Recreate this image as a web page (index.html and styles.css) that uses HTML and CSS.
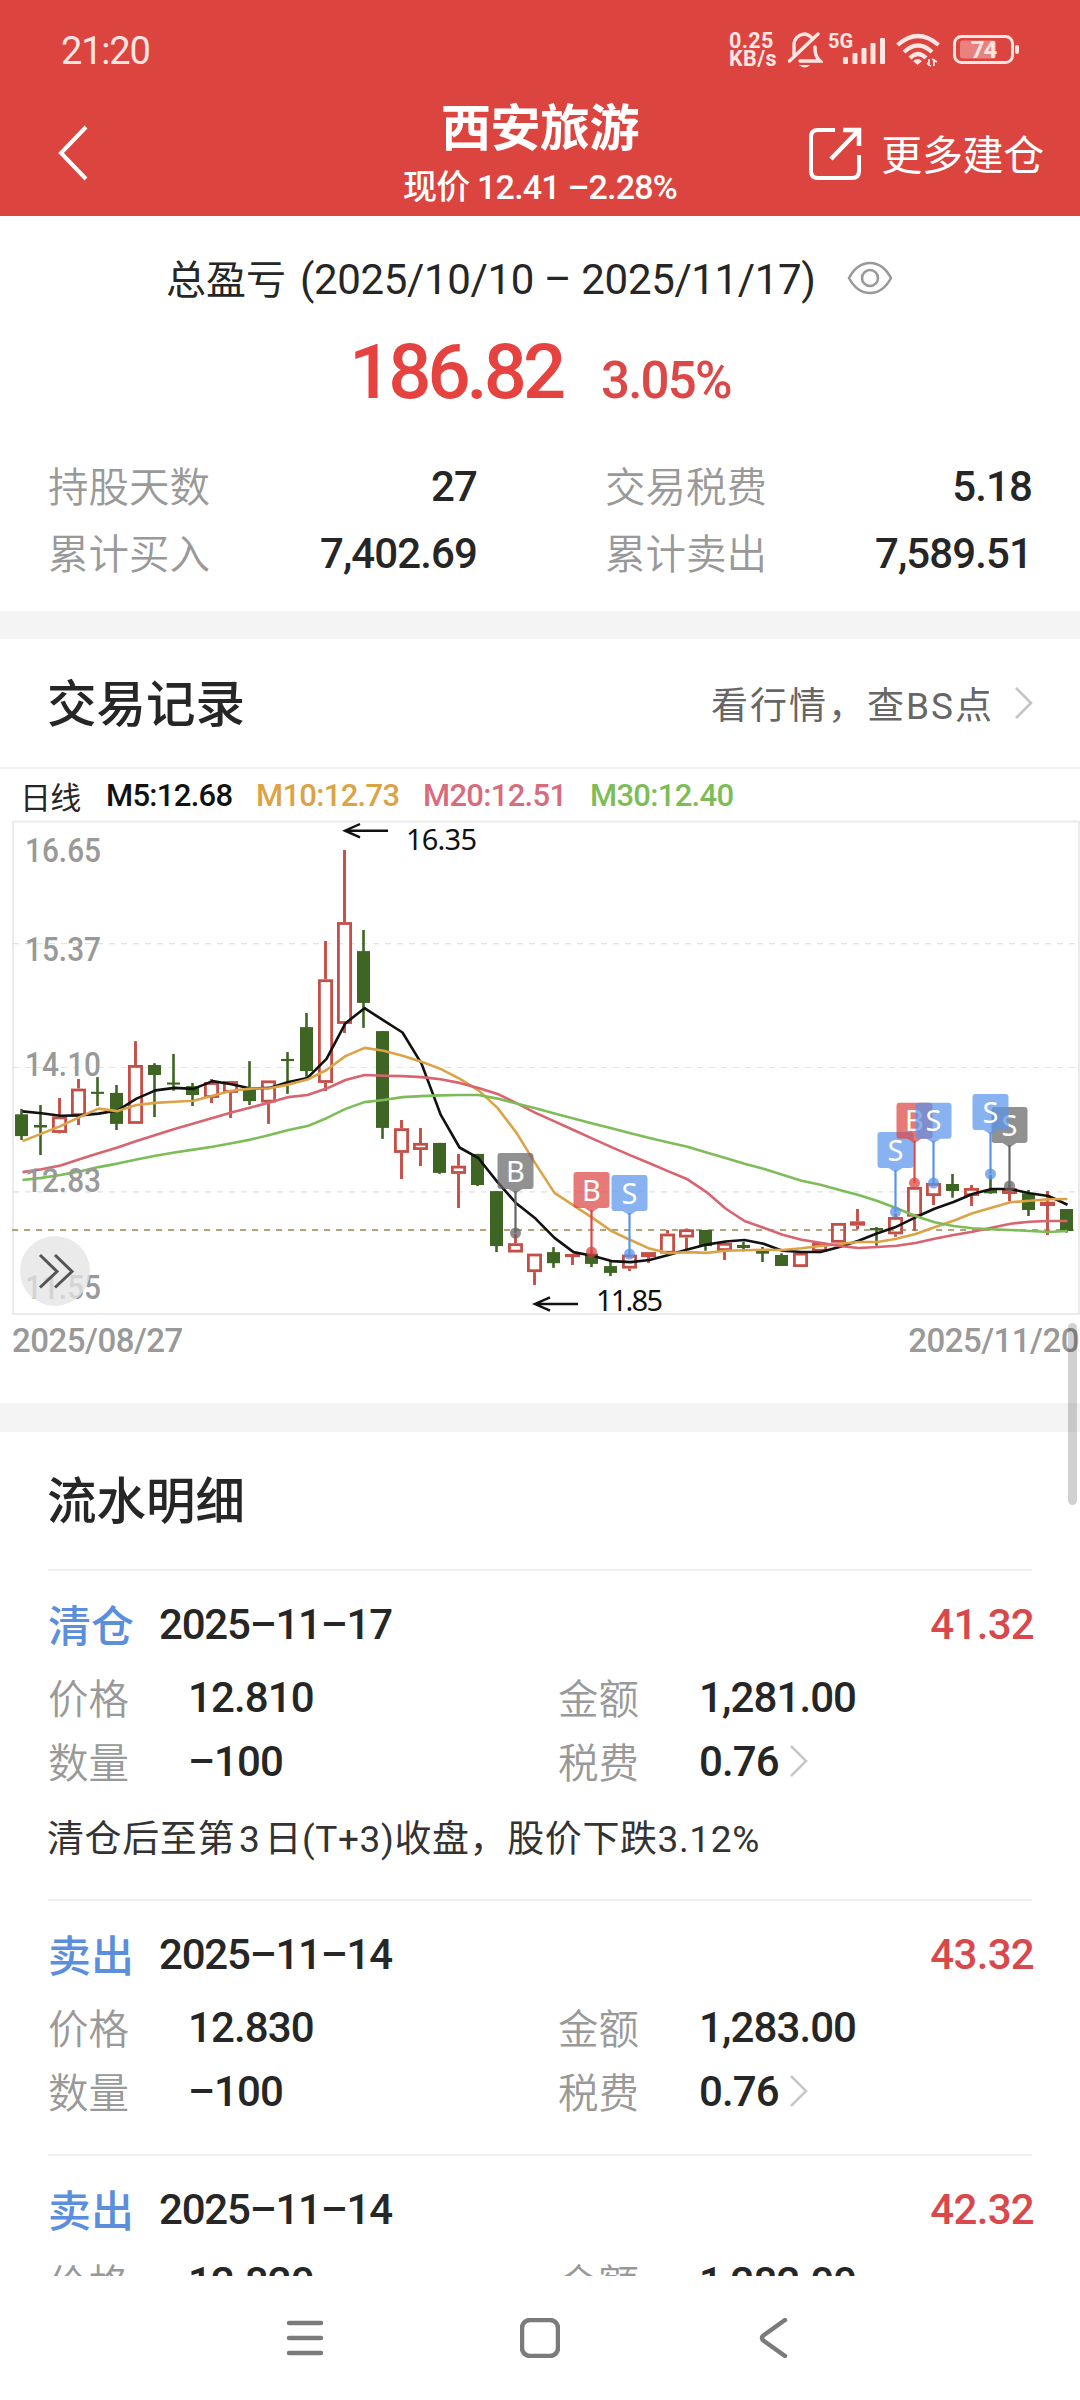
FILE: index.html
```html
<!DOCTYPE html>
<html lang="zh-CN">
<head>
  <meta charset="UTF-8">
  <meta name="viewport" content="width=device-width, initial-scale=1.0">
  <title>西安旅游</title>
  <link rel="stylesheet" href="styles.css">
</head>
<body>
  <div class="screen">
    <header class="header">
      <div class="status">
        <span class="clock">21:20</span>
        <div class="status-icons">
          <div class="speed"><span>0.25</span><span>KB/s</span></div>
          <svg class="bell" width="36" height="38" viewBox="0 0 36 38" fill="none" stroke="#ffe6e3" stroke-width="3.4" stroke-linecap="round">
            <path d="M7 24V14c0-6 4-10 10-11 3 0 5 1 7 3M2.500 30L31 3M13 30h20c-4-4-5-7-5-14"/>
            <path d="M12 34h11q-5 5-11 0z" fill="#ffe6e3" stroke="none"/>
          </svg>
          <svg class="signal" width="58" height="42" viewBox="0 -4 58 42">
            <text x="0" y="15" class="net">5G</text>
            <g fill="#ffe6e3"><rect x="15" y="24" width="5" height="7" rx="1"/><rect x="24.500" y="20" width="5" height="11" rx="1"/><rect x="33.500" y="15" width="5" height="16" rx="1"/><rect x="42.500" y="10" width="5" height="21" rx="1"/><rect x="52" y="5" width="5" height="26" rx="1"/></g>
          </svg>
          <svg class="wifi" width="44" height="34" viewBox="0 0 44 34" fill="none" stroke="#ffe6e3" stroke-width="4.200">
            <path d="M1.500 12Q22-6 42.500 12M8 19Q22 6 36 19M14 25Q22 17 30 25"/>
            <path d="M17 28q5-4 9 0l-4.500 4z" fill="#ffe6e3" stroke="none"/>
            <path d="M33 26v7M35 33l-4-3M38 33v-7M36 26l5 3" stroke-width="1.800"/>
          </svg>
          <svg class="battery" width="68" height="32" viewBox="0 0 68 32">
            <rect x="1.500" y="2.500" width="58" height="26" rx="7" fill="none" stroke="#ffe6e3" stroke-width="3"/>
            <rect x="7" y="6.500" width="36" height="18" rx="3" fill="#e9827e"/>
            <rect x="62" y="11" width="4" height="9" rx="2" fill="#ffe6e3"/>
            <text x="30.500" y="24" text-anchor="middle" class="level">74</text>
          </svg>
        </div>
      </div>
      <div class="nav">
        <svg class="back" width="32" height="56" viewBox="0 0 32 56" fill="none" stroke="#fff" stroke-width="4"><path d="M29 2L4 28l25 26"/></svg>
        <div class="heading">
          <h1>西安旅游</h1>
          <p>现价 12.41 –2.28%</p>
        </div>
        <div class="more">
          <svg width="54" height="54" viewBox="0 0 54 54" fill="none" stroke="#fff" stroke-width="4">
            <path d="M27 3H10q-7 0-7 7v34q0 7 7 7h34q7 0 7-7V28"/>
            <path d="M35 3h16v16M50 4L23 32" stroke-width="4.500"/>
          </svg>
          <span>更多建仓</span>
        </div>
      </div>
    </header>

    <section class="summary">
      <div class="period">
        <span>总盈亏</span><span class="range">(2025/10/10 – 2025/11/17)</span>
        <svg width="46" height="34" viewBox="0 0 46 34" fill="none" stroke="#999" stroke-width="2.600"><path d="M2 17Q10 2 23 2t21 15Q36 32 23 32T2 17z"/><circle cx="23" cy="17" r="8"/></svg>
      </div>
      <div class="profit"><span class="profit-value">186.82</span><span class="profit-rate">3.05%</span></div>
      <div class="stats">
        <span class="label">持股天数</span><span class="num">27</span>
        <span class="label">交易税费</span><span class="num">5.18</span>
        <span class="label">累计买入</span><span class="num">7,402.69</span>
        <span class="label">累计卖出</span><span class="num">7,589.51</span>
      </div>
    </section>

    <section class="trades">
      <div class="trades-head">
        <h2>交易记录</h2>
        <a class="link">看行情，查BS点
          <svg width="20" height="34" viewBox="0 0 20 34" fill="none" stroke="#c4c4c4" stroke-width="2.600"><path d="M2 2l15 15L2 32"/></svg>
        </a>
      </div>
      <div class="legend">
        <span class="cycle">日线</span><span class="m5">M5:12.68</span><span class="m10">M10:12.73</span><span class="m20">M20:12.51</span><span class="m30">M30:12.40</span>
      </div>
      <svg id="chart" class="chart" width="1080" height="504" viewBox="0 16 1080 504"></svg>
      <div class="dates"><span>2025/08/27</span><span>2025/11/20</span></div>
    </section>

    <section class="details">
      <h2 class="details-title">流水明细</h2>
      <article class="record">
        <div class="record-head"><span class="type">清仓</span><span class="num">2025–11–17</span><span class="num gain">41.32</span></div>
        <div class="fields">
          <span class="label">价格</span><span class="num">12.810</span><span class="label">金额</span><span class="num">1,281.00</span>
          <span class="label">数量</span><span class="num">–100</span><span class="label">税费</span><span class="num">0.76<svg width="20" height="34" viewBox="0 0 20 34"><path d="M2 2l15 15L2 32"/></svg></span>
        </div>
        <p class="note">清仓后至第<span class="day">3</span>日(T+3)收盘，股价下跌3.12%</p>
      </article>
      <article class="record">
        <div class="record-head"><span class="type">卖出</span><span class="num">2025–11–14</span><span class="num gain">43.32</span></div>
        <div class="fields">
          <span class="label">价格</span><span class="num">12.830</span><span class="label">金额</span><span class="num">1,283.00</span>
          <span class="label">数量</span><span class="num">–100</span><span class="label">税费</span><span class="num">0.76<svg width="20" height="34" viewBox="0 0 20 34"><path d="M2 2l15 15L2 32"/></svg></span>
        </div>
      </article>
      <article class="record">
        <div class="record-head"><span class="type">卖出</span><span class="num">2025–11–14</span><span class="num gain">42.32</span></div>
        <div class="fields">
          <span class="label">价格</span><span class="num">12.820</span><span class="label">金额</span><span class="num">1,282.00</span>
        </div>
      </article>
    </section>

    <nav class="system-bar">
      <svg width="40" height="40" viewBox="0 0 40 40"><path d="M4 5h32M4 20h32M4 35h32"/></svg>
      <svg width="40" height="40" viewBox="0 0 40 40"><rect x="2" y="2" width="36" height="36" rx="8"/></svg>
      <svg width="40" height="40" viewBox="0 0 40 40"><path d="M30 2L9 17q-4 3 0 6l21 15"/></svg>
    </nav>
    <div class="scrollbar"></div>
  </div>
  <script src="chart.js"></script>
</body>
</html>
```
FILE: styles.css
```css
* { box-sizing: border-box; margin: 0; padding: 0; }
body { font-family: Roboto, "Noto Sans CJK SC", sans-serif; background: #fff; color: #262626; }
.screen { position: relative; width: 1080px; height: 2400px; display: flex; flex-direction: column; overflow: hidden; }
svg { display: block; flex: none; }
h1, h2 { font-weight: 500; }

.header { height: 216px; flex: none; background: #dc443f; color: #fff; }
.status { height: 100px; padding: 0 59px 0 61px; display: flex; justify-content: space-between; align-items: center; color: #ffe6e3; }
.clock { font-size: 38px; letter-spacing: -1.2px; padding-top: 2px; }
.status-icons { display: flex; align-items: center; }
.speed { width: 48px; display: flex; flex-direction: column; font-size: 21.5px; line-height: 18px; font-weight: 700; letter-spacing: 0.4px; }
.bell { margin-left: 10px; }
.signal { margin-left: 5px; }
.wifi { margin-left: 10px; }
.battery { margin-left: 13px; }
.net { font-size: 20px; font-weight: 700; fill: #ffe6e3; }
.level { font-size: 24px; font-weight: 700; fill: #ffe6e3; letter-spacing: -1px; }
.nav { height: 116px; padding: 0 36px; display: grid; grid-template-columns: 1fr auto 1fr; }
.back { margin: 25px 0 0 21px; }
.heading { width: 300px; text-align: center; }
.heading h1 { margin-top: -1px; font-size: 50px; line-height: 60px; font-weight: 700; letter-spacing: -0.5px; }
.heading p { font-size: 34px; line-height: 56px; letter-spacing: -0.8px; font-weight: 500; white-space: nowrap; }
.more { height: 106px; display: flex; justify-content: flex-end; align-items: center; gap: 19px; font-size: 41px; letter-spacing: -0.3px; }
.more svg { margin-top: 1px; }
.more span { margin-top: -3px; }

.summary { height: 395px; flex: none; }
.period { height: 124px; padding-left: 166px; display: flex; align-items: center; font-size: 40px; }
.period span:first-child { margin-top: -3px; }
.range { margin-left: 14px; width: 512px; padding-top: 2px; font-size: 42px; letter-spacing: -0.35px; white-space: nowrap; }
.period svg { margin-left: 35px; }
.profit { height: 98px; margin-top: -17px; padding-left: 349px; display: flex; align-items: baseline; line-height: 98px; color: #e64340; font-weight: 500; }
.profit-value { width: 252px; font-size: 76px; letter-spacing: -4px; }
.profit-rate { font-size: 51px; letter-spacing: -1.8px; color: #dc4747; }
.stats { margin-top: 30px; padding: 0 48px; display: grid; grid-template-columns: 200px 229px 128px 200px 227px; grid-auto-rows: 67px; align-items: center; }
.stats .label:nth-of-type(4n+3) { grid-column: 4; }
.stats .num { text-align: right; padding-top: 3px; }
.label { font-size: 40.5px; color: #999; font-weight: 350; white-space: nowrap; }
.num { font-size: 42px; font-weight: 500; letter-spacing: -0.9px; white-space: nowrap; }

.trades { height: 792px; flex: none; border-top: 28px solid #f4f4f4; }
.trades-head { height: 130px; padding: 0 46px 0 47px; display: flex; justify-content: space-between; align-items: center; border-bottom: 2px solid #f0f0f0; }
.trades-head h2 { margin-top: -5px; }
.trades-head h2, .details-title { font-size: 49.5px; }
.link { display: flex; align-items: center; gap: 20px; font-size: 37px; letter-spacing: 2px; color: #666; }
.legend { height: 47px; padding-top: 6px; padding-left: 20px; display: flex; align-items: center; font-size: 31px; font-weight: 500; letter-spacing: -0.7px; white-space: nowrap; }
.cycle { width: 86px; font-weight: 400; }
.m5 { width: 150px; color: #111; }
.m10 { width: 167px; color: #dba345; }
.m20 { width: 167px; color: #d96c7c; }
.m30 { color: #7dbd58; }
.dates { height: 41px; padding: 0 1px 0 12px; display: flex; justify-content: space-between; align-items: center; font-size: 33px; color: #999; letter-spacing: -0.5px; font-weight: 500; }

.axis { font-size: 34px; font-weight: 500; fill: #999; }
.extreme { font-family: "Noto Sans", sans-serif; font-size: 29px; fill: #111; }
.tag-text { font-family: "Noto Sans", sans-serif; font-size: 29px; fill: #fff; text-anchor: middle; }

.details { flex: 1; min-height: 0; overflow: hidden; padding: 0 48px; border-top: 29px solid #f4f4f4; }
.details-title { height: 139px; line-height: 140px; margin-left: 0; border-bottom: 2px solid #f0f0f0; text-indent: -1px; }
.record { padding: 20px 0 31px; border-bottom: 2px solid #f0f0f0; }
.record-head { height: 66px; margin-bottom: 8px; display: flex; align-items: center; }
.type { width: 111px; margin-top: -2px; font-size: 43px; color: #5b8edb; font-weight: 500; }
.record-head .num { letter-spacing: -1.2px; }
.record-head .gain { margin-left: auto; margin-right: -2px; letter-spacing: -0.7px; color: #d9484a; }
.fields { display: grid; grid-template-columns: 140px 370px 141px 1fr; grid-auto-rows: 64px; align-items: center; }
.fields .label { margin-top: -2px; }
.fields .num { display: flex; align-items: center; gap: 10px; }
.fields path { fill: none; stroke: #c8c8c8; stroke-width: 2.6; }
.note { height: 60px; margin-top: 15px; line-height: 64px; font-size: 37px; letter-spacing: 0.6px; text-indent: -1px; color: #333; white-space: nowrap; }
.day { margin: 0 4px; }

.system-bar { height: 124px; flex: none; display: flex; justify-content: center; align-items: center; gap: 195px; background: #fff; }
.system-bar svg { fill: none; stroke: #7b7b7b; stroke-width: 4.5; stroke-linecap: round; }
.scrollbar { position: absolute; top: 1323px; right: 3px; width: 9px; height: 182px; border-radius: 5px; background: rgba(0, 0, 0, 0.18); }
```
FILE: chart.js
```javascript
const chart = document.getElementById('chart');
const x = i => 21.5 + 19 * i;

// [up/down, high, body top, body bottom, low]
const candles = [
  ['d', 308.9, 314.3, 336.1, 340], ['d', 305, 325, 327.5, 355], ['u', 297.9, 316.4, 332.9, 333.6], ['u', 278.9, 288.6, 316, 325],
  ['d', 277.1, 291.8, 293.9, 306], ['d', 285, 292.9, 323.9, 330], ['u', 241.1, 265, 323.9, 323.9], ['d', 263.2, 265, 275, 317.1],
  ['d', 253.9, 282.5, 284.6, 290.7], ['d', 282.9, 286.1, 295, 306], ['u', 278.9, 282.1, 297.9, 302.9], ['u', 281.1, 281.1, 292.9, 317.9],
  ['d', 261.1, 290, 301.1, 305], ['u', 280.4, 280.4, 302.5, 323.9], ['d', 252.1, 258.9, 261.1, 293.9], ['d', 212.9, 227.1, 271.1, 276.8],
  ['u', 141.1, 179.3, 282.9, 291.1], ['u', 50, 122.1, 223.9, 232.9], ['d', 130, 151.1, 202.9, 227.9], ['d', 231.1, 231.1, 327.9, 338.9],
  ['u', 320, 328.2, 352.9, 378.9], ['u', 327.9, 342.9, 350, 366.1], ['d', 342.9, 342.9, 372.9, 373.9], ['u', 353.9, 365.7, 373.9, 407.9],
  ['d', 353.9, 353.9, 385, 386.1], ['d', 391.1, 391.1, 446.1, 452.1], ['u', 434, 443.2, 452.5, 452.5], ['u', 453.6, 453.6, 472.1, 485],
  ['d', 447.1, 452.1, 463.2, 467.9], ['u', 453.9, 453.9, 456.8, 465], ['d', 450.7, 453.6, 463.9, 467.1], ['d', 460.7, 466.1, 472.9, 476.1],
  ['u', 453.6, 454.6, 468.6, 471.1], ['u', 452.1, 452.1, 457.1, 462.9], ['u', 430, 433.6, 453.6, 453.6], ['u', 428.6, 429.3, 437.5, 449.3],
  ['d', 430, 430, 446.1, 450.7], ['u', 442.1, 442.9, 451, 460], ['d', 442, 445, 448, 451.3], ['d', 447, 451, 453.7, 462],
  ['d', 453.3, 455, 466, 466], ['u', 452.7, 452.7, 467, 467], ['u', 442.5, 443, 451.7, 453.3], ['u', 423, 423, 442.7, 442.7],
  ['u', 409, 421.3, 425.7, 429.3], ['d', 427, 428, 430.3, 445.7], ['u', 413.3, 417, 434.3, 436.7], ['u', 387, 387, 416.7, 430.7],
  ['u', 383, 383, 396, 405], ['d', 374, 384, 391, 397.7], ['u', 385, 388, 396, 406], ['d', 375, 390, 393.3, 393.7],
  ['u', 385, 388.3, 394, 401.3], ['d', 390, 393.3, 410, 416], ['u', 391, 401.7, 406, 435], ['d', 409, 409, 431, 432.7]
];

const averages = [
  ['#111', [311.4, 313.2, 315.7, 315.4, 313.6, 310.5, 298.6, 290.4, 287.9, 288.9, 281.1, 284.3, 288.6, 287.9, 282.1, 277.9, 258.9, 223.2, 208.2, 220.4, 232.5, 263.6, 314.3, 347.5, 358.2, 382.1, 403.6, 418.6, 437.9, 452.1, 455.7, 461.1, 462.1, 460, 455, 449.6, 444.6, 441.5, 440, 443.7, 450.7, 452, 452, 447, 440.7, 433.3, 426.7, 417.3, 408.7, 402, 394, 389, 389, 393.3, 396, 404.7]],
  ['#dba345', [341.1, 333.6, 326.1, 317.1, 308.6, 311.1, 305, 302.9, 301.8, 300.7, 295.7, 290.7, 288.6, 288.2, 284.6, 279.6, 270, 256.1, 247.9, 250.7, 255.7, 261.8, 268.9, 278.6, 290.4, 307.9, 332.9, 363.6, 392.9, 405.4, 417.9, 431.1, 440, 448.6, 453.2, 452.1, 452.9, 450.7, 450.3, 449.7, 450, 448.3, 446, 444, 442, 442, 438.7, 434, 427.3, 420.7, 413.3, 407.7, 402.3, 400.7, 399.3, 399]],
  ['#d9636f', [372.1, 369.3, 365.4, 359.3, 353.2, 347.5, 341.1, 335, 328.9, 323.6, 317.9, 312.5, 307.5, 302.5, 297.1, 295, 288.6, 280, 275, 275.7, 276.1, 277.1, 279.3, 282.9, 287.9, 293.9, 303.2, 312.9, 321.4, 330, 338.6, 347.1, 355.4, 363.2, 371.4, 379.3, 392.1, 408.5, 421, 427.7, 434.7, 439.7, 442.7, 446, 448, 447, 445.7, 443, 438.7, 435, 431.7, 427.7, 423.7, 421.7, 421, 421]],
  ['#7dbd58', [380, 377.9, 375, 371.4, 367.1, 363.6, 359.6, 355.7, 352.5, 349.6, 346.8, 343.2, 339.6, 335, 330, 326.1, 318.2, 308.9, 302.1, 300, 297.1, 296.1, 295.4, 295, 295, 298.6, 303.6, 308.2, 313.6, 318.6, 323.6, 328.2, 333.2, 337.9, 342.5, 346.8, 352.5, 358, 363.7, 368.7, 374.7, 380.7, 384.7, 390, 395, 401, 408.3, 416, 422.3, 426, 428.3, 429.3, 430, 431, 432, 431]]
];

// [candle index, letter, colour, tag top, dot centre]
const tags = [
  [26, 'B', 'gray', 353, 433], [30, 'B', 'red', 372, 452], [32, 'S', 'blue', 375, 454],
  [46, 'S', 'blue', 332, 412], [47, 'B', 'red', 302.7, 383], [48, 'S', 'blue', 302.7, 383],
  [52, 'S', 'gray', 307, 386], [51, 'S', 'blue', 294, 374]
];
const tagColors = { gray: '#666', red: '#dc4744', blue: '#5a94ea' };

let svg = '<rect x="13" y="21.500" width="1066" height="492.500" fill="none" stroke="#ebebeb" stroke-width="2"/>';
[143.6, 267.5, 391.8].forEach(y => {
  svg += `<path d="M13 ${y}H1079" stroke="#e2e2e2" stroke-width="1.2" stroke-dasharray="6 6"/>`;
});
svg += '<path d="M12 430H1075" stroke="#b3a47c" stroke-width="2" stroke-dasharray="6 6"/>';

candles.forEach(([dir, high, top, bottom, low], i) => {
  const cx = x(i);
  if (dir === 'd') {
    svg += `<path d="M${cx} ${high}V${low}" stroke="#3f6524" stroke-width="2.6"/>`;
    svg += `<rect x="${cx - 6.5}" y="${top}" width="13" height="${bottom - top}" fill="#3f6524"/>`;
  } else {
    svg += `<path d="M${cx} ${high}V${top}M${cx} ${bottom}V${low}" stroke="#c54f47" stroke-width="2.9"/>`;
    svg += `<rect x="${cx - 6.1}" y="${top + 1.4}" width="12.2" height="${Math.max(bottom - top - 2.8, 0.4)}" fill="none" stroke="#c54f47" stroke-width="2.8"/>`;
  }
});

averages.forEach(([color, values]) => {
  const points = values.map((y, i) => `${x(i) + 1},${y}`).join(' ');
  svg += `<polyline points="${points}" fill="none" stroke="${color}" stroke-width="2.6" stroke-linejoin="round"/>`;
});

[['16.65', 61.8], ['15.37', 160.7], ['14.10', 275.7], ['12.83', 392], ['11.55', 499]].forEach(([label, y]) => {
  svg += `<text class="axis" x="25" y="${y}" textLength="76" lengthAdjust="spacingAndGlyphs">${label}</text>`;
});

tags.forEach(([i, letter, color, top, dot]) => {
  const cx = x(i);
  const fill = tagColors[color];
  svg += `<path d="M${cx} ${top + 38}V${dot}" stroke="${fill}" stroke-width="2.2"/>`;
  svg += `<circle cx="${cx}" cy="${dot}" r="5.5" fill="${fill}" opacity="0.75"/>`;
  svg += `<path d="M${cx - 15} ${top}h30q3 0 3 3v30q0 3-3 3h-8l-7 4.500l-7-4.500h-8q-3 0-3-3v-30q0-3 3-3z" fill="${fill}" opacity="0.72"/>`;
  svg += `<text class="tag-text" x="${cx}" y="${top + 28.5}">${letter}</text>`;
});

svg += '<path d="M388 30.700H345M360 24l-15 6.700l15 6.700M578 504h-43M550 497.300l-15 6.700l15 6.700" fill="none" stroke="#111" stroke-width="2.400"/>';
svg += '<text class="extreme" x="406" y="50" textLength="71">16.35</text><text class="extreme" x="596" y="510.500" textLength="67">11.85</text>';
svg += '<circle cx="55" cy="471" r="35" fill="#e4e4e4" opacity="0.78"/>';
svg += '<path d="M40 455l17 16.500l-17 16M55 455l17 16.500l-17 16" fill="none" stroke="#555" stroke-width="3"/>';
chart.innerHTML = svg;
```
